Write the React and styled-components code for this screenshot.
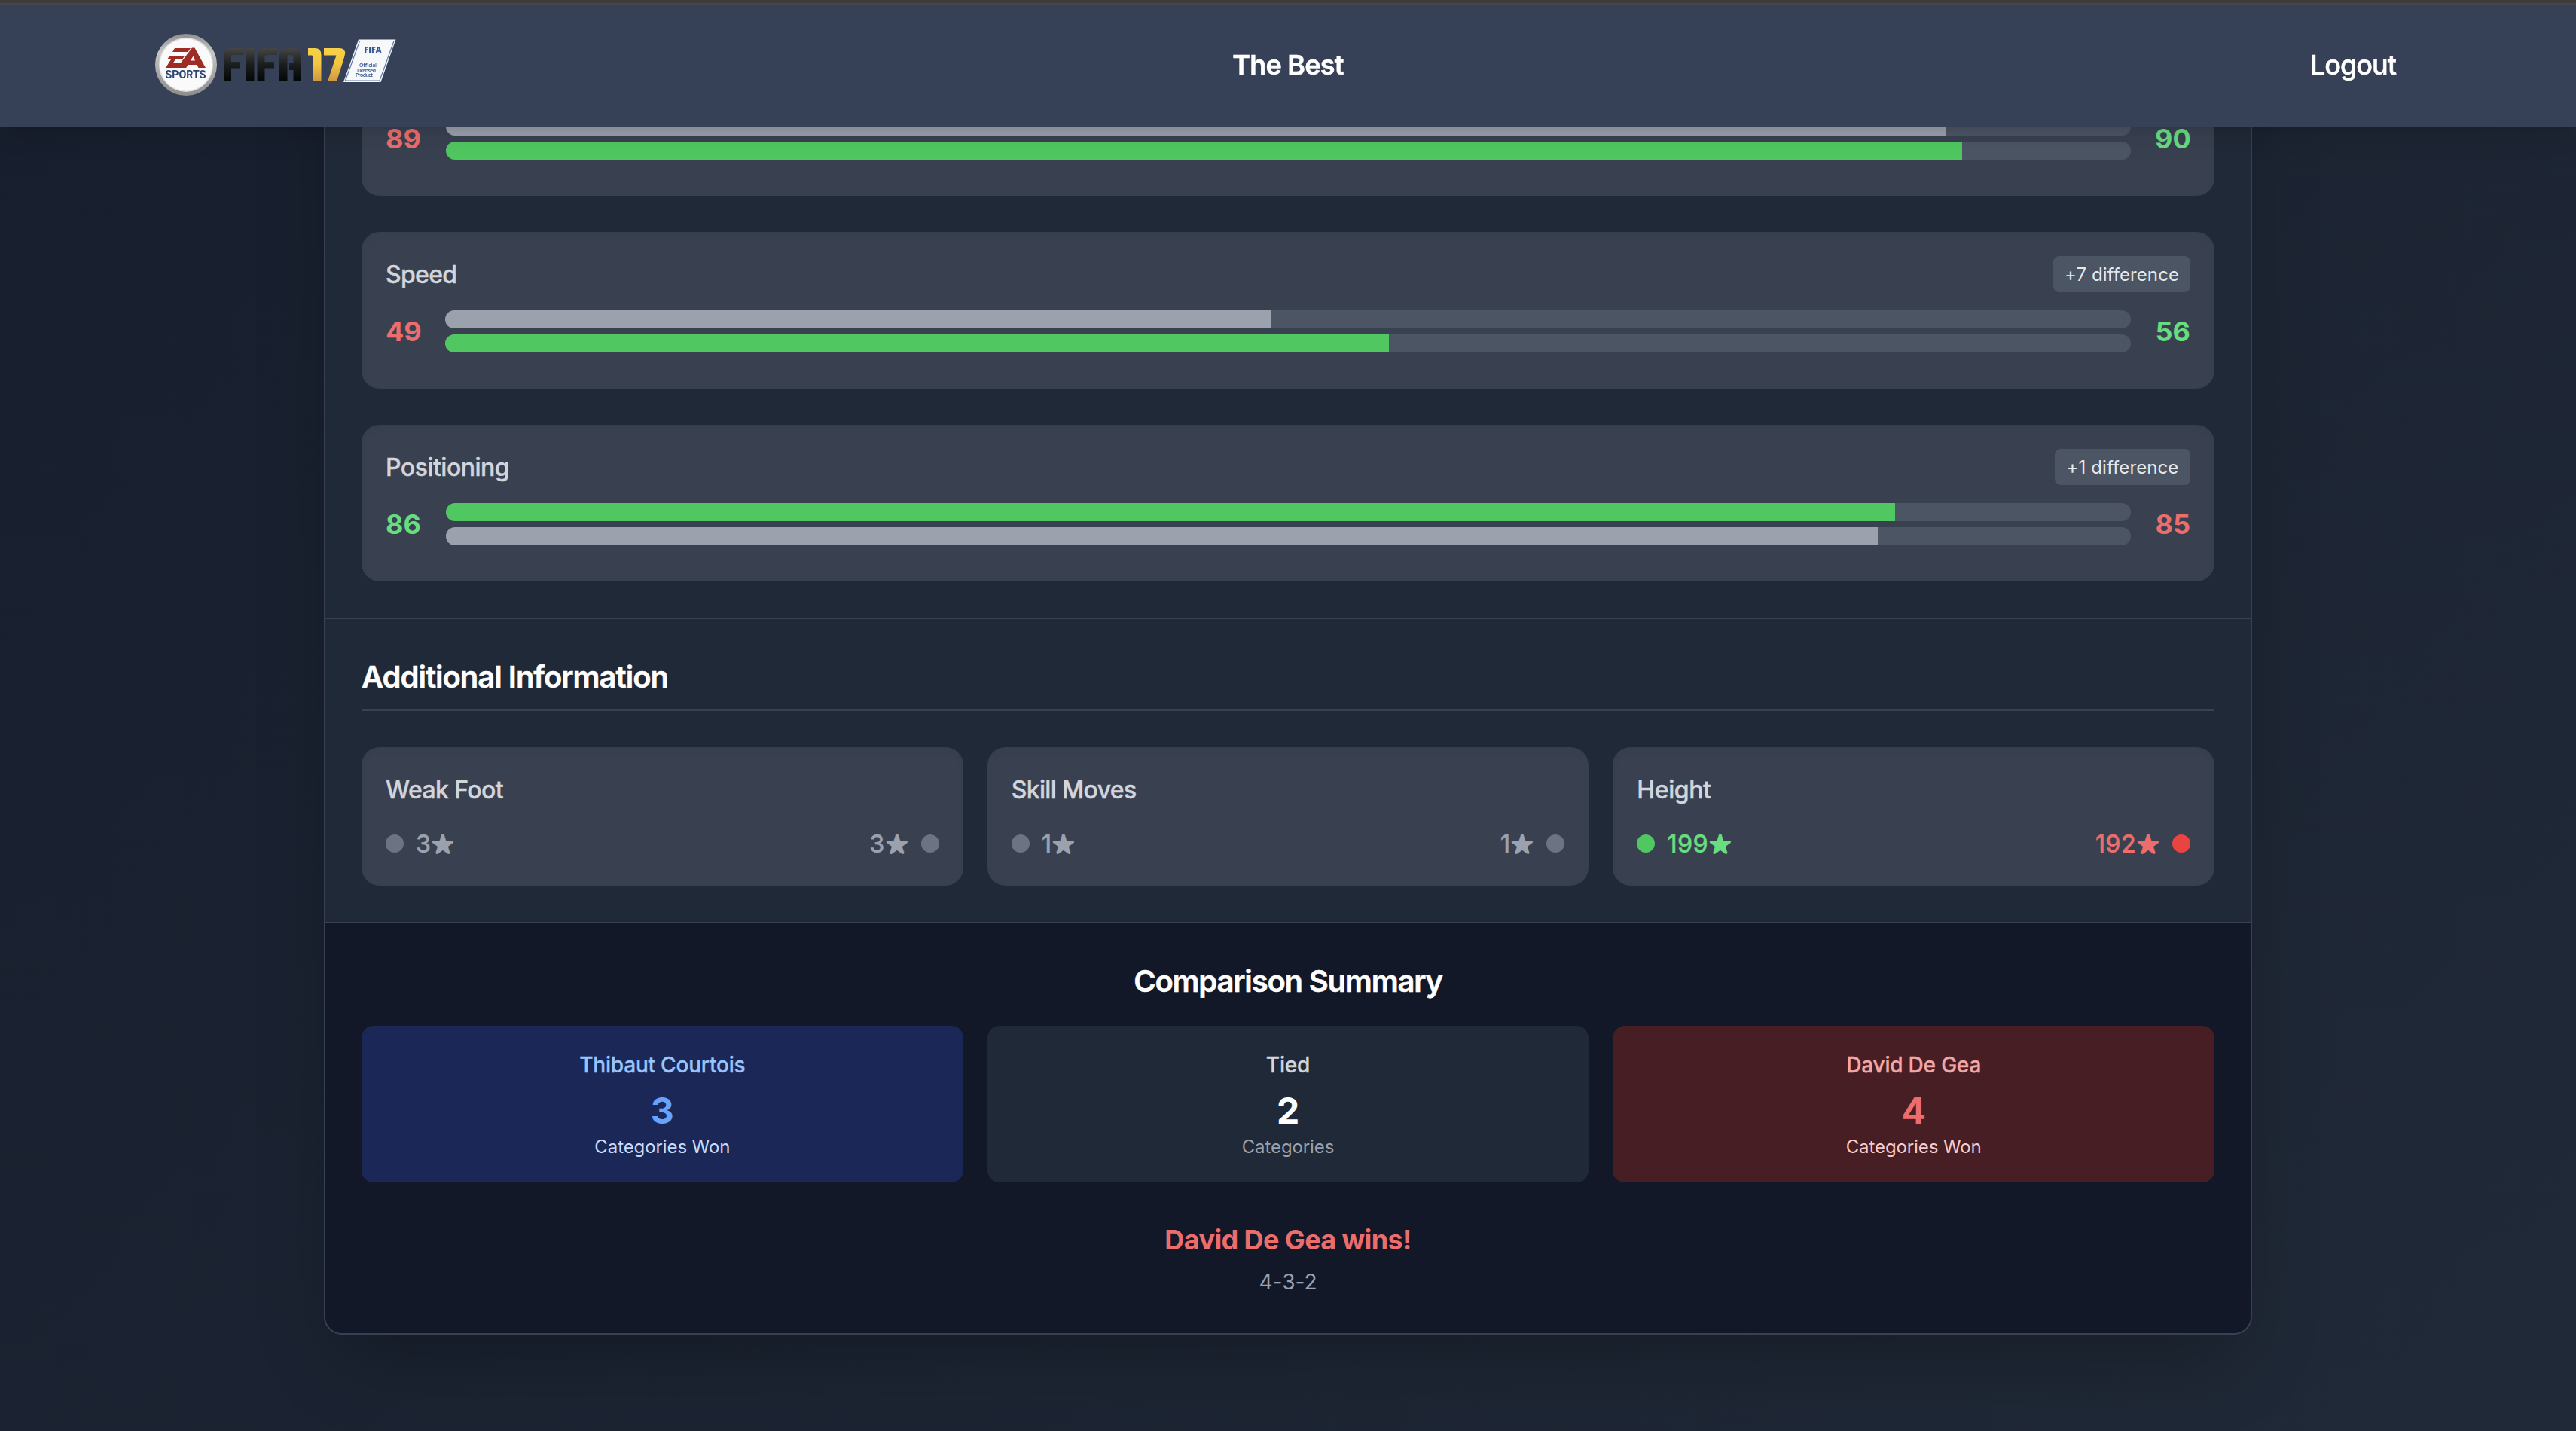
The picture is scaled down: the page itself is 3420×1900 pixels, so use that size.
import React from "react";
import styled, { createGlobalStyle } from "styled-components";

const GlobalStyle = createGlobalStyle`
  *, *::before, *::after { box-sizing: border-box; }
  html, body { margin: 0; height: 100%; overflow: hidden; background: #171e2d; }
  body {
    font-family: Inter, "Liberation Sans", sans-serif;
    font-size: 32px;
    line-height: 48px;
    color: #fff;
    font-feature-settings: "calt" 0;
    -webkit-font-smoothing: antialiased;
  }
  h2, p { margin: 0; }
`;

const tones = {
  win: { text: "#68dc7f", dot: "#50c761" },
  lose: { text: "#ed6d6c", dot: "#e94442" },
  tie: { text: "#9ba1ad", dot: "#6c7382" },
};

const Page = styled.div`
  height: 1900px;
  overflow: hidden;
  background: linear-gradient(135deg, #171e2d 0%, #202937 100%);
`;

const TopEdge = styled.div`
  position: fixed;
  inset: 0 0 auto 0;
  z-index: 11;
  height: 6px;
  background: #3c3c3c;
  border-bottom: 2px solid #474747;
`;

const Nav = styled.header`
  position: fixed;
  inset: 0 0 auto 0;
  z-index: 10;
  height: 168px;
  padding: 6px 206px 2px;
  display: grid;
  grid-template-columns: 1fr auto 1fr;
  align-items: center;
  background: #364158;
  box-shadow: 0 20px 30px -6px rgba(0, 0, 0, 0.1), 0 8px 12px -8px rgba(0, 0, 0, 0.1);
`;

const NavLink = styled.a`
  justify-self: ${(p) => p.$align || "center"};
  margin-right: ${(p) => p.$inset || 0}px;
  font-size: 36px;
  line-height: 56px;
  font-weight: ${(p) => p.$weight};
  letter-spacing: ${(p) => p.$spacing}px;
  color: #fff;
  -webkit-text-stroke: 0.5px currentColor;
`;

const Panel = styled.main`
  width: 2560px;
  height: 1972px;
  margin: -200px auto 0;
  padding-top: 250px;
  display: flex;
  flex-direction: column;
  background: #202937;
  border: 2px solid #384151;
  border-radius: 24px;
  overflow: hidden;
  box-shadow: 0 50px 100px -24px rgba(0, 0, 0, 0.25);
`;

const Stats = styled.section`
  display: flex;
  flex-direction: column;
  gap: 48px;
  padding: 0 48px 48px;
`;

const Card = styled.article`
  padding: 32px;
  border-radius: 24px;
  background: #394151;
  box-shadow: inset 0 4px 8px rgba(0, 0, 0, 0.05);
`;

const StatCard = styled(Card)`
  height: 208px;
`;

const StatHead = styled.div`
  display: flex;
  justify-content: space-between;
  align-items: center;
  height: 48px;
  margin-bottom: 24px;
`;

const Label = styled.span`
  display: block;
  padding-top: 1px;
  line-height: 48px;
  height: 48px;
  font-weight: 500;
  letter-spacing: ${(p) => p.$spacing || 0}px;
  color: #d2d5db;
  -webkit-text-stroke: 0.4px currentColor;
`;

const Pill = styled.span`
  width: ${(p) => p.$width}px;
  padding: 9px 0 7px;
  text-align: center;
  border-radius: 8px;
  background: #4c5564;
  color: #e5e7eb;
  font-size: 24px;
  line-height: 32px;
  letter-spacing: 0.1px;
`;

const StatBody = styled.div`
  display: flex;
  align-items: center;
  gap: 32px;
`;

const Score = styled.span`
  width: ${(p) => p.$width}px;
  font-size: 36px;
  line-height: 56px;
  font-weight: 700;
  white-space: nowrap;
  letter-spacing: 0;
  text-align: ${(p) => p.$align || "left"};
  color: ${(p) => tones[p.$tone].text};
`;

const Bars = styled.div`
  flex: 1;
  display: flex;
  flex-direction: column;
  gap: 8px;
`;

const Track = styled.div`
  height: 24px;
  border-radius: 12px;
  background: #4c5564;
  overflow: hidden;
`;

const Fill = styled.div`
  height: 100%;
  background: ${(p) => (p.$winner ? "#50c761" : "#9ba1ad")};
`;

const Info = styled.section`
  padding: 48px;
  border-top: 2px solid #384151;
`;

const SectionTitle = styled.h2`
  padding-top: 1px;
  font-size: 40px;
  line-height: 56px;
  font-weight: 600;
  letter-spacing: ${(p) => p.$spacing}px;
  -webkit-text-stroke: 0.5px currentColor;
`;

const InfoTitle = styled(SectionTitle)`
  padding-bottom: 15px;
  margin-bottom: 48px;
  border-bottom: 2px solid #384151;
`;

const Thirds = styled.div`
  display: grid;
  grid-template-columns: repeat(3, 1fr);
  gap: 32px;
`;

const InfoRow = styled.div`
  display: flex;
  justify-content: space-between;
  margin-top: 24px;
`;

const Side = styled.div`
  display: flex;
  flex-direction: ${(p) => (p.$reverse ? "row-reverse" : "row")};
  align-items: center;
  gap: 16px;
  height: 48px;
  font-weight: 500;
  letter-spacing: 0.4px;
  color: ${(p) => tones[p.$tone].text};
`;

const Value = styled.span`
  display: flex;
  align-items: center;
  padding-top: 1px;
  height: 48px;
  -webkit-text-stroke: 0.3px currentColor;
`;

const StarIcon = styled.svg`
  width: 32px;
  height: 48px;
  overflow: visible;
  font-family: "DejaVu Sans", sans-serif;
  font-size: 32px;
  font-weight: 400;
  letter-spacing: 0;
  fill: currentColor;
  stroke: currentColor;
  stroke-width: 3.6px;
  stroke-linejoin: round;
`;

const Dot = styled.span`
  width: 24px;
  height: 24px;
  border-radius: 50%;
  background: ${(p) => tones[p.$tone].dot};
`;

const Summary = styled.section`
  flex: 1;
  padding: 48px;
  border-top: 2px solid #384151;
  background: #121828;
  text-align: center;
`;

const SummaryTitle = styled(SectionTitle)`
  margin-bottom: 31px;
`;

const Tally = styled.div`
  height: 208px;
  padding: 32px;
  border-radius: 16px;
  background: ${(p) => p.$bg};
`;

const TallyName = styled.p`
  margin-bottom: 9px;
  font-size: 28px;
  line-height: 40px;
  font-weight: 500;
  letter-spacing: -0.2px;
  color: ${(p) => p.$color};
  -webkit-text-stroke: 0.3px currentColor;
`;

const TallyCount = styled.p`
  font-size: 48px;
  line-height: 64px;
  font-weight: 700;
  color: ${(p) => p.$color};
`;

const TallyNote = styled.p`
  font-size: 24px;
  line-height: 32px;
  letter-spacing: -0.1px;
  color: ${(p) => p.$color};
`;

const Winner = styled.p`
  margin-top: 48px;
  font-size: 36px;
  line-height: 56px;
  font-weight: 700;
  letter-spacing: -0.6px;
  color: #ed6d6c;
`;

const FinalScore = styled.p`
  margin-top: 8px;
  font-size: 28px;
  line-height: 40px;
  color: #9ba1ad;
`;

const stats = [
  { left: 89, right: 90, width: 48 },
  { label: "Speed", spacing: -0.7, left: 49, right: 56, width: 47, pill: 182 },
  { label: "Positioning", spacing: -0.5, left: 86, right: 85, width: 48, pill: 180 },
];

const infos = [
  { label: "Weak Foot", spacing: -0.6, left: 3, right: 3 },
  { label: "Skill Moves", spacing: -0.65, left: 1, right: 1 },
  { label: "Height", spacing: -0.4, left: 199, right: 192 },
];

const tallies = [
  { name: "Thibaut Courtois", count: 3, note: "Categories Won", bg: "#1b2857", colors: ["#99c4fc", "#68a2fb", "#c7dcfc"] },
  { name: "Tied", count: 2, note: "Categories", bg: "#202937", colors: ["#d2d5db", "#ffffff", "#9ba1ad"] },
  { name: "David De Gea", count: 4, note: "Categories Won", bg: "#471e24", colors: ["#f2a6a5", "#ed6d6c", "#f6cbcb"] },
];

const toneOf = (a, b) => (a === b ? "tie" : a > b ? "win" : "lose");

function Logo() {
  return (
    <svg width="320" height="82" viewBox="206 45 320 82">
      <defs>
        <linearGradient id="rim" x1="0" y1="0" x2="0" y2="1">
          <stop offset="0" stopColor="#8f8f8f" />
          <stop offset="0.3" stopColor="#c6c6c6" />
          <stop offset="0.7" stopColor="#a2a2a2" />
          <stop offset="1" stopColor="#8d8d8d" />
        </linearGradient>
        <linearGradient id="ink" gradientUnits="userSpaceOnUse" x1="0" y1="64" x2="0" y2="108">
          <stop offset="0" stopColor="#454545" />
          <stop offset="0.5" stopColor="#1a1d1e" />
          <stop offset="1" stopColor="#020607" />
        </linearGradient>
        <linearGradient id="gold" gradientUnits="userSpaceOnUse" x1="0" y1="64" x2="0" y2="108">
          <stop offset="0" stopColor="#f8d147" />
          <stop offset="0.45" stopColor="#f3c743" />
          <stop offset="1" stopColor="#cf9740" />
        </linearGradient>
      </defs>
      <circle cx="247" cy="86" r="41" fill="url(#rim)" />
      <circle cx="247" cy="86" r="36" fill="#e0e0e0" />
      <circle cx="247" cy="86" r="34.5" fill="#fafafa" />
      <g fill="#9f2b26">
        <path d="M232 64h21l-3.500 5h-20.500z" />
        <path d="M225 74.500h20l-3 4.500h-9l-3.500 5h10l15.500-20.500h3.500l14.500 26.500h-9.500l-2-4h-11.500l-3 4h-27l7-11h-5z M253 80.500h6l-2.500-6z" fillRule="evenodd" />
      </g>
      <text x="246.500" y="103.500" textAnchor="middle" textLength="54" lengthAdjust="spacingAndGlyphs" fontFamily="Roboto, sans-serif" fontWeight="700" fontSize="15.500" fill="#2c4373">SPORTS</text>
      <g fill="url(#ink)">
        <path d="M297 108V73q0-9 9-9h17.500v9H310q-3 0-3 3v6h12v8.500h-12V108z" />
        <path d="M327 64h10.500v44H327z" />
        <path d="M341.500 108V73q0-9 9-9H368v9h-13.500q-3 0-3 3v6H364v8.500h-12.500V108z" />
        <path d="M371 108V74q0-10 10-10h9q10 0 10 10v34h-10.500V93h-5.500v-9.500h5.500V76q0-3-3-3h-2q-3 0-3 3v32z" />
      </g>
      <g fill="url(#gold)">
        <path d="M409 64h9q8.500 0 8.500 9v35H416V76q0-2.500-2.500-2.500H409z" />
        <path d="M430 64h20.500q8.500 0 7.500 8l-1.500 6L447 108h-12l11.500-34.500H430z" />
      </g>
      <path d="M476 52.500h49.500L505.500 109H456z" fill="#f7f8fa" />
      <path d="M477.500 54.500h45.500L504 107h-45.500zM469 78.500h45.500" fill="none" stroke="#5c7aa6" strokeWidth="1.200" />
      <g fill="#35578f" fontFamily="Open Sans, sans-serif" textAnchor="middle">
        <text x="495" y="70" fontSize="10" fontWeight="800" textLength="23" lengthAdjust="spacingAndGlyphs">FIFA</text>
        <g fontSize="7" fontWeight="600">
          <text x="488.500" y="89" textLength="23">Official</text>
          <text x="486.500" y="95.500" textLength="25">Licensed</text>
          <text x="483.500" y="101.800" textLength="23">Product</text>
        </g>
      </g>
    </svg>
  );
}

function Star() {
  return (
    <StarIcon viewBox="0 0 32 48">
      <text x="1.500" y="35">★</text>
    </StarIcon>
  );
}

function Stat({ label, spacing, left, right, width, pill }) {
  return (
    <StatCard>
      <StatHead>
        {label && <Label $spacing={spacing}>{label}</Label>}
        {pill && <Pill $width={pill}>+{Math.abs(left - right)} difference</Pill>}
      </StatHead>
      <StatBody>
        <Score $width={width} $tone={toneOf(left, right)}>{left}</Score>
        <Bars>
          <Track><Fill $winner={left > right} style={{ width: `${left}%` }} /></Track>
          <Track><Fill $winner={right > left} style={{ width: `${right}%` }} /></Track>
        </Bars>
        <Score $width={47} $align="right" $tone={toneOf(right, left)}>{right}</Score>
      </StatBody>
    </StatCard>
  );
}

function InfoSide({ value, tone, reverse }) {
  return (
    <Side $tone={tone} $reverse={reverse}>
      <Dot $tone={tone} />
      <Value>{value}<Star /></Value>
    </Side>
  );
}

export default function App() {
  return (
    <Page>
      <GlobalStyle />
      <TopEdge />
      <Nav>
        <Logo />
        <NavLink $weight={600} $spacing={-0.8}>The Best</NavLink>
        <NavLink $weight={500} $spacing={-1} $align="end" $inset={33}>Logout</NavLink>
      </Nav>
      <Panel>
        <Stats>{stats.map((s) => <Stat key={s.left} {...s} />)}</Stats>
        <Info>
          <InfoTitle $spacing={-1}>Additional Information</InfoTitle>
          <Thirds>
            {infos.map((i) => (
              <Card key={i.label}>
                <Label $spacing={i.spacing}>{i.label}</Label>
                <InfoRow>
                  <InfoSide value={i.left} tone={toneOf(i.left, i.right)} />
                  <InfoSide value={i.right} tone={toneOf(i.right, i.left)} reverse />
                </InfoRow>
              </Card>
            ))}
          </Thirds>
        </Info>
        <Summary>
          <SummaryTitle $spacing={-1.2}>Comparison Summary</SummaryTitle>
          <Thirds>
            {tallies.map((t) => (
              <Tally key={t.name} $bg={t.bg}>
                <TallyName $color={t.colors[0]}>{t.name}</TallyName>
                <TallyCount $color={t.colors[1]}>{t.count}</TallyCount>
                <TallyNote $color={t.colors[2]}>{t.note}</TallyNote>
              </Tally>
            ))}
          </Thirds>
          <Winner>David De Gea wins!</Winner>
          <FinalScore>4-3-2</FinalScore>
        </Summary>
      </Panel>
    </Page>
  );
}
